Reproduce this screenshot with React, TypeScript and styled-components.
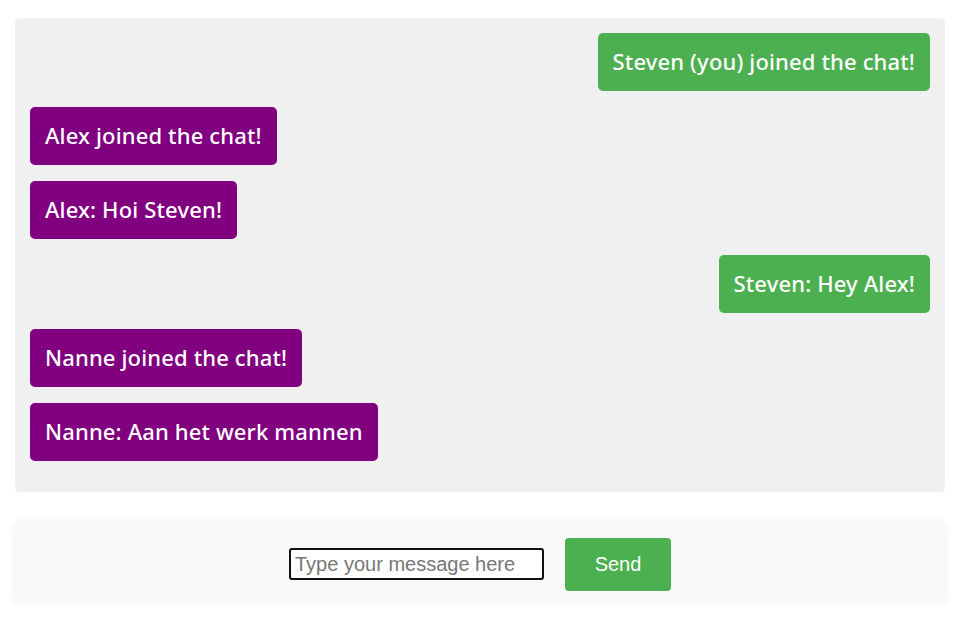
import React from "react";
import styled, { createGlobalStyle } from "styled-components";

const Global = createGlobalStyle`
  html, body { margin: 0; padding: 0; background: #ffffff; }
  body { font-family: "Liberation Sans", Arial, sans-serif; }
`;

const Page = styled.div`
  padding: 18px 21px 0 15px;
  display: flex;
  flex-direction: column;
  gap: 30px;
`;

const ChatBox = styled.div`
  background: #f0f0f0;
  border-radius: 5px;
  padding: 15px 15px 15px;
  display: flex;
  flex-direction: column;
`;

const Row = styled.div<{ $mine: boolean }>`
  display: flex;
  justify-content: ${(p) => (p.$mine ? "flex-end" : "flex-start")};
  margin-bottom: 16px;
`;

const Bubble = styled.div<{ $mine: boolean }>`
  background: ${(p) => (p.$mine ? "#4caf50" : "#800080")};
  color: #ffffff;
  border-radius: 5px;
  padding: 0 15px 3px;
  height: 58px;
  box-sizing: border-box;
  display: flex;
  align-items: center;
  font-family: "Noto Sans", "Open Sans", sans-serif;
  font-weight: 500;
  font-size: 22px;
  letter-spacing: 0.15px;
`;

const Footer = styled.div`
  background: #f9f9f9;
  border-radius: 6px;
  box-shadow: 0 0 10px rgba(0, 0, 0, 0.08);
  height: 83px;
  display: flex;
  align-items: center;
  justify-content: center;
  gap: 21px;
  padding-top: 1px;
  box-sizing: border-box;
`;

const Input = styled.input`
  width: 255px;
  height: 32px;
  box-sizing: border-box;
  border: 2px solid #111;
  border-radius: 3px;
  padding: 0 4px;
  font-family: "Liberation Sans", Arial, sans-serif;
  font-size: 20px;
  background: #fff;
  outline: none;
  &::placeholder { color: #777; }
`;

const SendButton = styled.button`
  width: 106px;
  height: 53px;
  border: none;
  border-radius: 4px;
  background: #4caf50;
  color: #fff;
  font-family: "Liberation Sans", Arial, sans-serif;
  font-size: 20px;
  cursor: pointer;
`;

const messages = [
  { mine: true, text: "Steven (you) joined the chat!" },
  { mine: false, text: "Alex joined the chat!" },
  { mine: false, text: "Alex: Hoi Steven!" },
  { mine: true, text: "Steven: Hey Alex!" },
  { mine: false, text: "Nanne joined the chat!" },
  { mine: false, text: "Nanne: Aan het werk mannen" },
];

export default function App() {
  return (
    <>
      <Global />
      <Page>
        <ChatBox>
          {messages.map((m, i) => (
            <Row key={i} $mine={m.mine}>
              <Bubble $mine={m.mine}>{m.text}</Bubble>
            </Row>
          ))}
        </ChatBox>
        <Footer>
          <Input placeholder="Type your message here" />
          <SendButton>Send</SendButton>
        </Footer>
      </Page>
    </>
  );
}
